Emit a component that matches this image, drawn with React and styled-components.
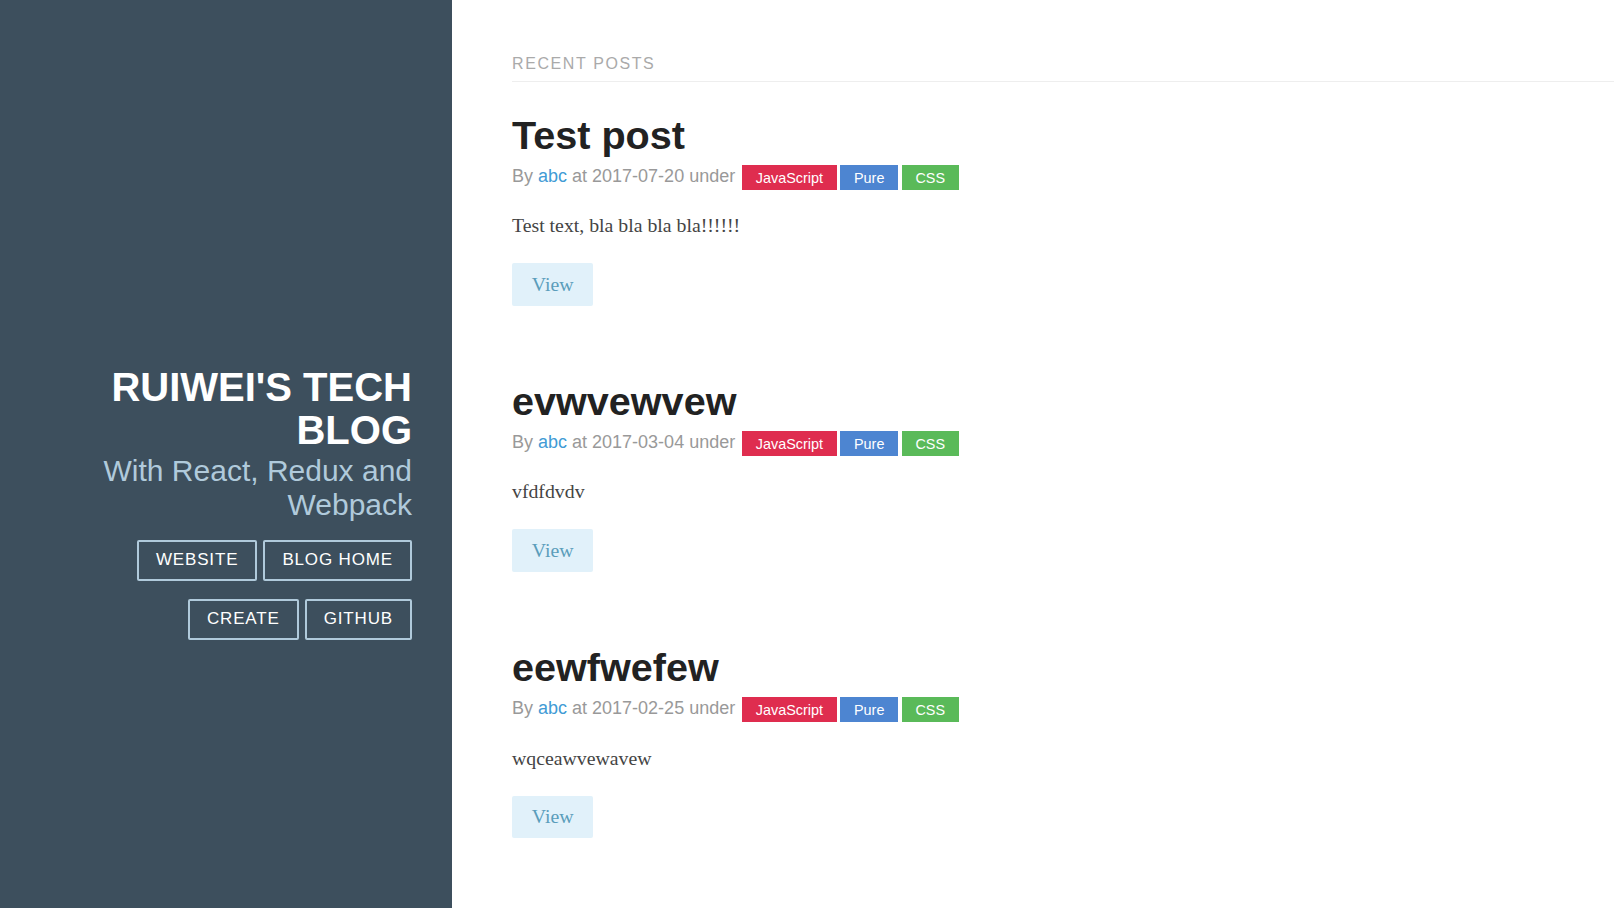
import styled, { createGlobalStyle } from "styled-components";

const GlobalStyle = createGlobalStyle`
  html, body {
    margin: 0;
    padding: 0;
    background: #fff;
    font-family: "Liberation Sans", Arial, sans-serif;
  }
`;

const posts = [
  { id: 1, title: "Test post", author: "abc", date: "2017-07-20", text: "Test text, bla bla bla bla!!!!!!" },
  { id: 2, title: "evwvewvew", author: "abc", date: "2017-03-04", text: "vfdfdvdv" },
  { id: 3, title: "eewfwefew", author: "abc", date: "2017-02-25", text: "wqceawvewavew" },
];

const tags = [
  { name: "JavaScript", color: "#df2d4f" },
  { name: "Pure", color: "#4d85d1" },
  { name: "CSS", color: "#5aba59" },
];

const navLinks = ["Website", "Blog Home", "Create", "Github"];

const App = () => {
  return (
    <Wrapper>
      <GlobalStyle />
      <Sidebar>
        <Brand>
          <BrandTitle>Ruiwei's Tech Blog</BrandTitle>
          <BrandTagline>With React, Redux and Webpack</BrandTagline>
          <Nav>
            {navLinks.map((link) => (
              <NavButton key={link} href="#">{link}</NavButton>
            ))}
          </Nav>
        </Brand>
      </Sidebar>
      <Content>
        <Subhead>Recent Posts</Subhead>
        <Posts>
          {posts.map((post) => (
            <Post key={post.id}>
              <PostTitle>{post.title}</PostTitle>
              <Meta>
                By <AuthorLink href="#">{post.author}</AuthorLink> at {post.date} under{" "}
                {tags.map((tag) => (
                  <Tag key={tag.name} color={tag.color}>{tag.name}</Tag>
                ))}
              </Meta>
              <Description>{post.text}</Description>
              <ViewButton>View</ViewButton>
            </Post>
          ))}
        </Posts>
      </Content>
    </Wrapper>
  );
};

const Wrapper = styled.div`
  display: flex;
  min-height: 100vh;
`;

const Sidebar = styled.aside`
  flex: 0 0 452px;
  width: 452px;
  min-height: 100vh;
  background: #3d4f5d;
  box-sizing: border-box;
  padding: 366px 40px 0;
  text-align: right;
`;

const Brand = styled.div`
  display: flex;
  flex-direction: column;
  align-items: flex-end;
`;

const BrandTitle = styled.h1`
  margin: 0;
  font-size: 40px;
  line-height: 43px;
  font-weight: bold;
  color: #fff;
  text-transform: uppercase;
`;

const BrandTagline = styled.h2`
  margin: 1.5px 0 0;
  font-size: 30px;
  line-height: normal;
  font-weight: normal;
  color: #b0cadb;
`;

const Nav = styled.nav`
  display: flex;
  flex-wrap: wrap;
  justify-content: flex-end;
  column-gap: 6px;
  row-gap: 18px;
  margin-top: 18px;
`;

const NavButton = styled.a`
  display: inline-block;
  padding: 0.5em 1em;
  font-size: 17px;
  line-height: normal;
  letter-spacing: 0.05em;
  text-transform: uppercase;
  text-decoration: none;
  color: #fff;
  border: 2px solid #b0cadb;
  border-radius: 2px;
`;

const Content = styled.main`
  flex: 1;
  padding: 46.5px 0 0 60px;
`;

const Subhead = styled.h1`
  margin: 0;
  padding: 8px 0;
  font-size: 16px;
  line-height: normal;
  font-weight: normal;
  letter-spacing: 0.1em;
  text-transform: uppercase;
  color: #aaa;
  border-bottom: 1px solid #eee;
`;

const Posts = styled.section`
  margin-top: 30.5px;
`;

const Post = styled.article`
  margin-bottom: 72px;
`;

const PostTitle = styled.h2`
  margin: 0;
  font-size: 39.6px;
  line-height: 1.2;
  font-weight: bold;
  color: #222;
`;

const Meta = styled.p`
  margin: 5.7px 0 0;
  font-size: 18px;
  line-height: normal;
  color: #999;
`;

const AuthorLink = styled.a`
  color: #419bd5;
  text-decoration: none;
`;

const Tag = styled.a`
  display: inline-block;
  margin: 0 0.12em;
  padding: 0.3em 0.96em;
  font-size: 80%;
  line-height: normal;
  color: #fff;
  background: ${(props) => props.color};
`;

const Description = styled.p`
  margin: 18.5px 0 0;
  font-family: "Liberation Serif", Georgia, serif;
  font-size: 19.8px;
  line-height: 1.8em;
  color: #444;
`;

const ViewButton = styled.button`
  display: inline-block;
  margin-top: 19.4px;
  padding: 0.5em 1em;
  font-family: "Liberation Serif", Georgia, serif;
  font-size: 19.8px;
  line-height: normal;
  color: #5a9dbb;
  background: #e1f1fa;
  border: none;
  border-radius: 2px;
  cursor: pointer;
`;

export default App;
